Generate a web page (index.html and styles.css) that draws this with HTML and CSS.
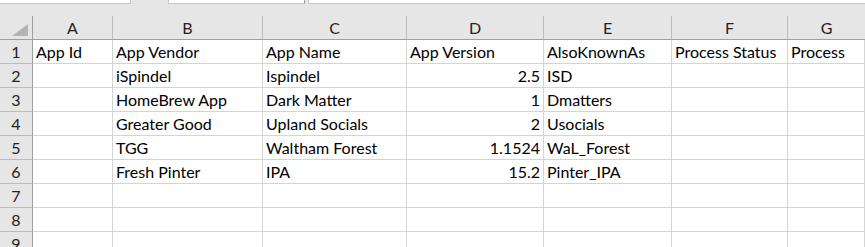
FILE: index.html
```html
<!doctype html>
<html><head>
  <title>Book1 - Excel</title>
  <meta charset="utf-8">
  <link rel="stylesheet" href="styles.css">
</head><body>
  <div class="formula-strip">
    <div class="name-box"></div>
    <div class="fx-box"></div>
    <div class="formula-box"></div>
  </div>
  <div class="sheet">
    <div class="corner"><span class="corner-tri"></span></div>
    <div class="col-head">A</div>
    <div class="col-head">B</div>
    <div class="col-head">C</div>
    <div class="col-head">D</div>
    <div class="col-head">E</div>
    <div class="col-head">F</div>
    <div class="col-head last">G</div>

    <div class="row-head">1</div>
    <div class="cell">App Id</div>
    <div class="cell">App Vendor</div>
    <div class="cell">App Name</div>
    <div class="cell">App Version</div>
    <div class="cell">AlsoKnownAs</div>
    <div class="cell">Process Status</div>
    <div class="cell">Process</div>

    <div class="row-head">2</div>
    <div class="cell"></div>
    <div class="cell">iSpindel</div>
    <div class="cell">Ispindel</div>
    <div class="cell num">2.5</div>
    <div class="cell">ISD</div>
    <div class="cell"></div>
    <div class="cell"></div>

    <div class="row-head">3</div>
    <div class="cell"></div>
    <div class="cell">HomeBrew App</div>
    <div class="cell">Dark Matter</div>
    <div class="cell num">1</div>
    <div class="cell">Dmatters</div>
    <div class="cell"></div>
    <div class="cell"></div>

    <div class="row-head">4</div>
    <div class="cell"></div>
    <div class="cell">Greater Good</div>
    <div class="cell">Upland Socials</div>
    <div class="cell num">2</div>
    <div class="cell">Usocials</div>
    <div class="cell"></div>
    <div class="cell"></div>

    <div class="row-head">5</div>
    <div class="cell"></div>
    <div class="cell">TGG</div>
    <div class="cell">Waltham Forest</div>
    <div class="cell num">1.1524</div>
    <div class="cell">WaL_Forest</div>
    <div class="cell"></div>
    <div class="cell"></div>

    <div class="row-head">6</div>
    <div class="cell"></div>
    <div class="cell">Fresh Pinter</div>
    <div class="cell">IPA</div>
    <div class="cell num">15.2</div>
    <div class="cell">Pinter_IPA</div>
    <div class="cell"></div>
    <div class="cell"></div>

    <div class="row-head">7</div>
    <div class="cell"></div><div class="cell"></div><div class="cell"></div><div class="cell"></div><div class="cell"></div><div class="cell"></div><div class="cell"></div>

    <div class="row-head">8</div>
    <div class="cell"></div><div class="cell"></div><div class="cell"></div><div class="cell"></div><div class="cell"></div><div class="cell"></div><div class="cell"></div>

    <div class="row-head">9</div>
    <div class="cell"></div><div class="cell"></div><div class="cell"></div><div class="cell"></div><div class="cell"></div><div class="cell"></div><div class="cell"></div>
  </div>
</body></html>
```

FILE: styles.css
```css
body {
    margin: 0;
    background: #e6e6e6;
    font: 16px Lato, 'Noto Sans', sans-serif;
    color: #000;
    overflow: hidden;
}

.formula-strip {
    display: flex;
    height: 16px;
}

.name-box,
.fx-box,
.formula-box {
    height: 4px;
    box-sizing: border-box;
    background: #fff;
    border-bottom: 1px solid #c6c6c6;
}

.name-box {
    width: 131px;
    border-right: 1px solid #c6c6c6;
}

.fx-box {
    margin-left: 37px;
    width: 137px;
    border-left: 1px solid #c6c6c6;
    border-right: 1px solid #9a9a9a;
}

.formula-box {
    margin-left: 3px;
    flex: 1;
    border-left: 1px solid #c6c6c6;
}

.sheet {
    display: grid;
    grid-template-columns: 33px 80px 150px 144px 137px 128px 116px 1fr;
    grid-template-rows: 24px repeat(9, 24px);
}

.corner,
.col-head,
.row-head,
.cell {
    box-sizing: border-box;
    white-space: nowrap;
    overflow: hidden;
}

.corner {
    border-right: 1px solid #9f9f9f;
    border-bottom: 1px solid #9f9f9f;
    position: relative;
}

.corner-tri {
    position: absolute;
    right: 4px;
    bottom: 3px;
    width: 0;
    height: 0;
    border-left: 16px solid transparent;
    border-bottom: 12px solid #b4b4b4;
}

.col-head {
    border-right: 1px solid #bcbcbc;
    border-bottom: 1px solid #9f9f9f;
    text-align: center;
    line-height: 23px;
    color: #222;
}

.col-head.last {
    border-right: none;
}

.row-head {
    border-right: 1px solid #9f9f9f;
    border-bottom: 1px solid #bcbcbc;
    text-align: center;
    line-height: 23px;
    color: #222;
}

.cell {
    background: #fff;
    border-right: 1px solid #d4d4d4;
    border-bottom: 1px solid #d4d4d4;
    padding: 0 3px;
    line-height: 23px;
}

.num {
    text-align: right;
}
```
